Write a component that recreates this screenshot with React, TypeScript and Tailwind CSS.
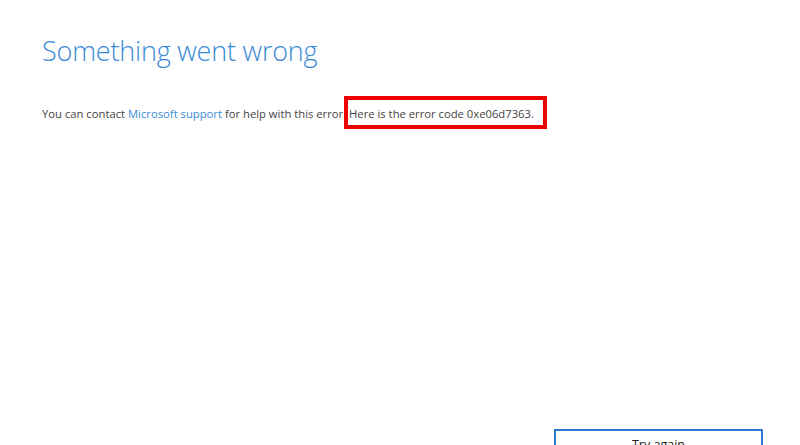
export default function App() {
  return (
    <div
      className="relative flex h-[445px] w-[800px] flex-col overflow-hidden bg-white"
      style={{ fontFamily: '"Open Sans", "Liberation Sans", sans-serif' }}
    >
      {/* Content */}
      <div className="flex flex-col pl-[42px] pt-[33px]">
        <h1 className="text-[27px] font-light leading-[36px] tracking-[-0.2px] text-[#3a8ad6]">
          Something went wrong
        </h1>
        <p className="mt-[36px] text-[11.25px] leading-[18px] text-[#444]">
          You can contact{' '}
          <a className="text-[#3a8ad6]" href="#">
            Microsoft support
          </a>{' '}
          for help with this error.{' '}
          <span className="relative">
            Here is the error code 0xe06d7363.
            <span className="absolute left-[-5px] right-[-13px] top-[-10px] bottom-[-8px] border-4 border-[#ee0000]" />
          </span>
        </p>
      </div>

      {/* Button */}
      <div className="mt-auto flex justify-end pr-[37px]">
        <button className="mb-[-20px] flex h-[36px] w-[209px] items-start justify-center border-2 border-[#2b7bd0] bg-white pt-[6px] text-[12.5px] leading-[16px] text-[#222]">
          Try again
        </button>
      </div>
    </div>
  );
}
